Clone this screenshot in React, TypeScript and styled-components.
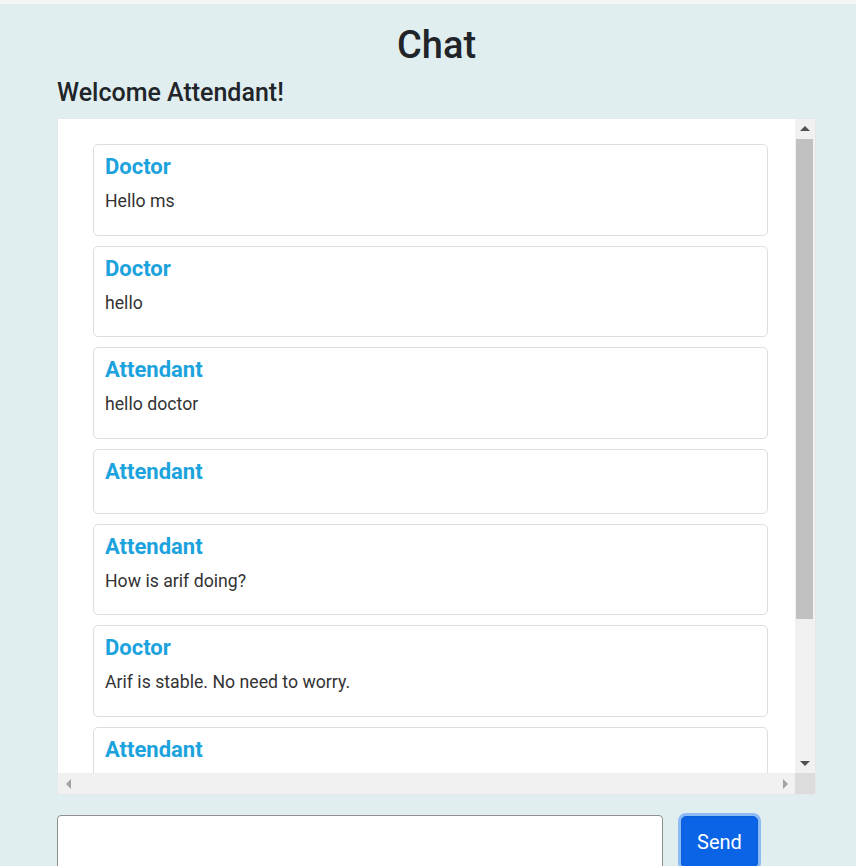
import React from "react";
import styled, { createGlobalStyle } from "styled-components";

const GlobalStyle = createGlobalStyle`
  html, body { margin: 0; padding: 0; }
  body {
    background: #e0eef0;
    font-family: Roboto, "Liberation Sans", Arial, sans-serif;
    color: #212529;
    overflow: hidden;
  }
  * { box-sizing: border-box; }
`;

const TopStrip = styled.div`
  height: 4px;
  background: #f3f5f6;
`;

const Page = styled.main`
  width: 759px;
  margin-left: 57px;
  display: flex;
  flex-direction: column;
`;

const Title = styled.h1`
  margin: 18px 0 0;
  font-size: 38px;
  line-height: 46px;
  font-weight: 500;
  text-align: center;
  color: #212529;
`;

const Welcome = styled.h2`
  margin: 10px 0 10px;
  font-size: 25px;
  line-height: 30px;
  font-weight: 500;
  color: #212529;
`;

const ChatFrame = styled.section`
  height: 677px;
  border: 1px solid #e4e8ea;
  background: #fff;
  display: grid;
  grid-template-columns: 1fr 20px;
  grid-template-rows: 1fr 21px;
`;

const Viewport = styled.div`
  overflow: hidden;
`;

const VScroll = styled.div`
  background: #f1f1f1;
  display: flex;
  flex-direction: column;
`;

const HScroll = styled.div`
  background: #f1f1f1;
  display: flex;
  justify-content: space-between;
  align-items: center;
`;

const Corner = styled.div`
  background: #dcdcdc;
`;

const ArrowBox = styled.div<{ $w: number; $h: number }>`
  width: ${(p) => p.$w}px;
  height: ${(p) => p.$h}px;
  display: flex;
  align-items: center;
  justify-content: center;
  flex: none;
`;

const Track = styled.div`
  flex: 1;
  padding-top: 1px;
`;

const Thumb = styled.div`
  height: 480px;
  margin: 0 2px 0 1px;
  background: #c1c1c1;
`;

const Arrow = ({ dir, color }: { dir: "up" | "down" | "left" | "right"; color: string }) => {
  const d = {
    up: "M0 6 L6 0 L12 6 Z",
    down: "M0 0 L12 0 L6 6 Z",
    left: "M6 0 L6 12 L0 6 Z",
    right: "M0 0 L6 6 L0 12 Z",
  }[dir];
  const horizontal = dir === "left" || dir === "right";
  return (
    <svg
      width={horizontal ? 5 : 10}
      height={horizontal ? 10 : 5}
      viewBox={horizontal ? "0 0 6 12" : "0 0 12 6"}
    >
      <path d={d} fill={color} />
    </svg>
  );
};

const MessageList = styled.div`
  display: flex;
  flex-direction: column;
  gap: 10px;
  padding: 25px 27px 25px 35px;
`;

const Card = styled.article`
  border: 1px solid #dcdfe2;
  border-radius: 5px;
  padding: 8px 11px 20px;
  background: #fff;
`;

const Sender = styled.div`
  font-size: 22px;
  line-height: 28px;
  font-weight: 700;
  color: #1ca3dd;
  margin-bottom: 7px;
`;

const Body = styled.p`
  margin: 0;
  font-size: 17.7px;
  line-height: 26.5px;
  color: #333;
  &:empty { display: none; }
`;

const Composer = styled.div`
  display: flex;
  align-items: flex-start;
  gap: 18px;
  margin-top: 20px;
`;

const Input = styled.textarea`
  width: 606px;
  height: 60px;
  border: 1px solid #8f8f8f;
  border-radius: 4px;
  background: #fff;
  resize: none;
  font-family: inherit;
`;

const SendButton = styled.button`
  margin-top: 1px;
  width: 77px;
  height: 52px;
  border: 1px solid #0a5ed8;
  border-radius: 5px;
  background: #0b63e5;
  color: #fff;
  font-family: inherit;
  font-size: 20px;
  box-shadow: 0 0 0 3px #8dbbf5;
`;

const messages: { from: string; text: string }[] = [
  { from: "Doctor", text: "Hello ms" },
  { from: "Doctor", text: "hello" },
  { from: "Attendant", text: "hello doctor" },
  { from: "Attendant", text: "" },
  { from: "Attendant", text: "How is arif doing?" },
  { from: "Doctor", text: "Arif is stable. No need to worry." },
  { from: "Attendant", text: "" },
];

export default function App() {
  return (
    <>
      <GlobalStyle />
      <TopStrip />
      <Page>
        <Title>Chat</Title>
        <Welcome>Welcome Attendant!</Welcome>
        <ChatFrame>
          <Viewport>
            <MessageList>
              {messages.map((m, i) => (
                <Card key={i}>
                  <Sender>{m.from}</Sender>
                  <Body>{m.text}</Body>
                </Card>
              ))}
            </MessageList>
          </Viewport>
          <VScroll>
            <ArrowBox $w={20} $h={19}>
              <Arrow dir="up" color="#505050" />
            </ArrowBox>
            <Track>
              <Thumb />
            </Track>
            <ArrowBox $w={20} $h={20}>
              <Arrow dir="down" color="#505050" />
            </ArrowBox>
          </VScroll>
          <HScroll>
            <ArrowBox $w={20} $h={21}>
              <Arrow dir="left" color="#a3a3a3" />
            </ArrowBox>
            <ArrowBox $w={20} $h={21}>
              <Arrow dir="right" color="#a3a3a3" />
            </ArrowBox>
          </HScroll>
          <Corner />
        </ChatFrame>
        <Composer>
          <Input />
          <SendButton>Send</SendButton>
        </Composer>
      </Page>
    </>
  );
}
